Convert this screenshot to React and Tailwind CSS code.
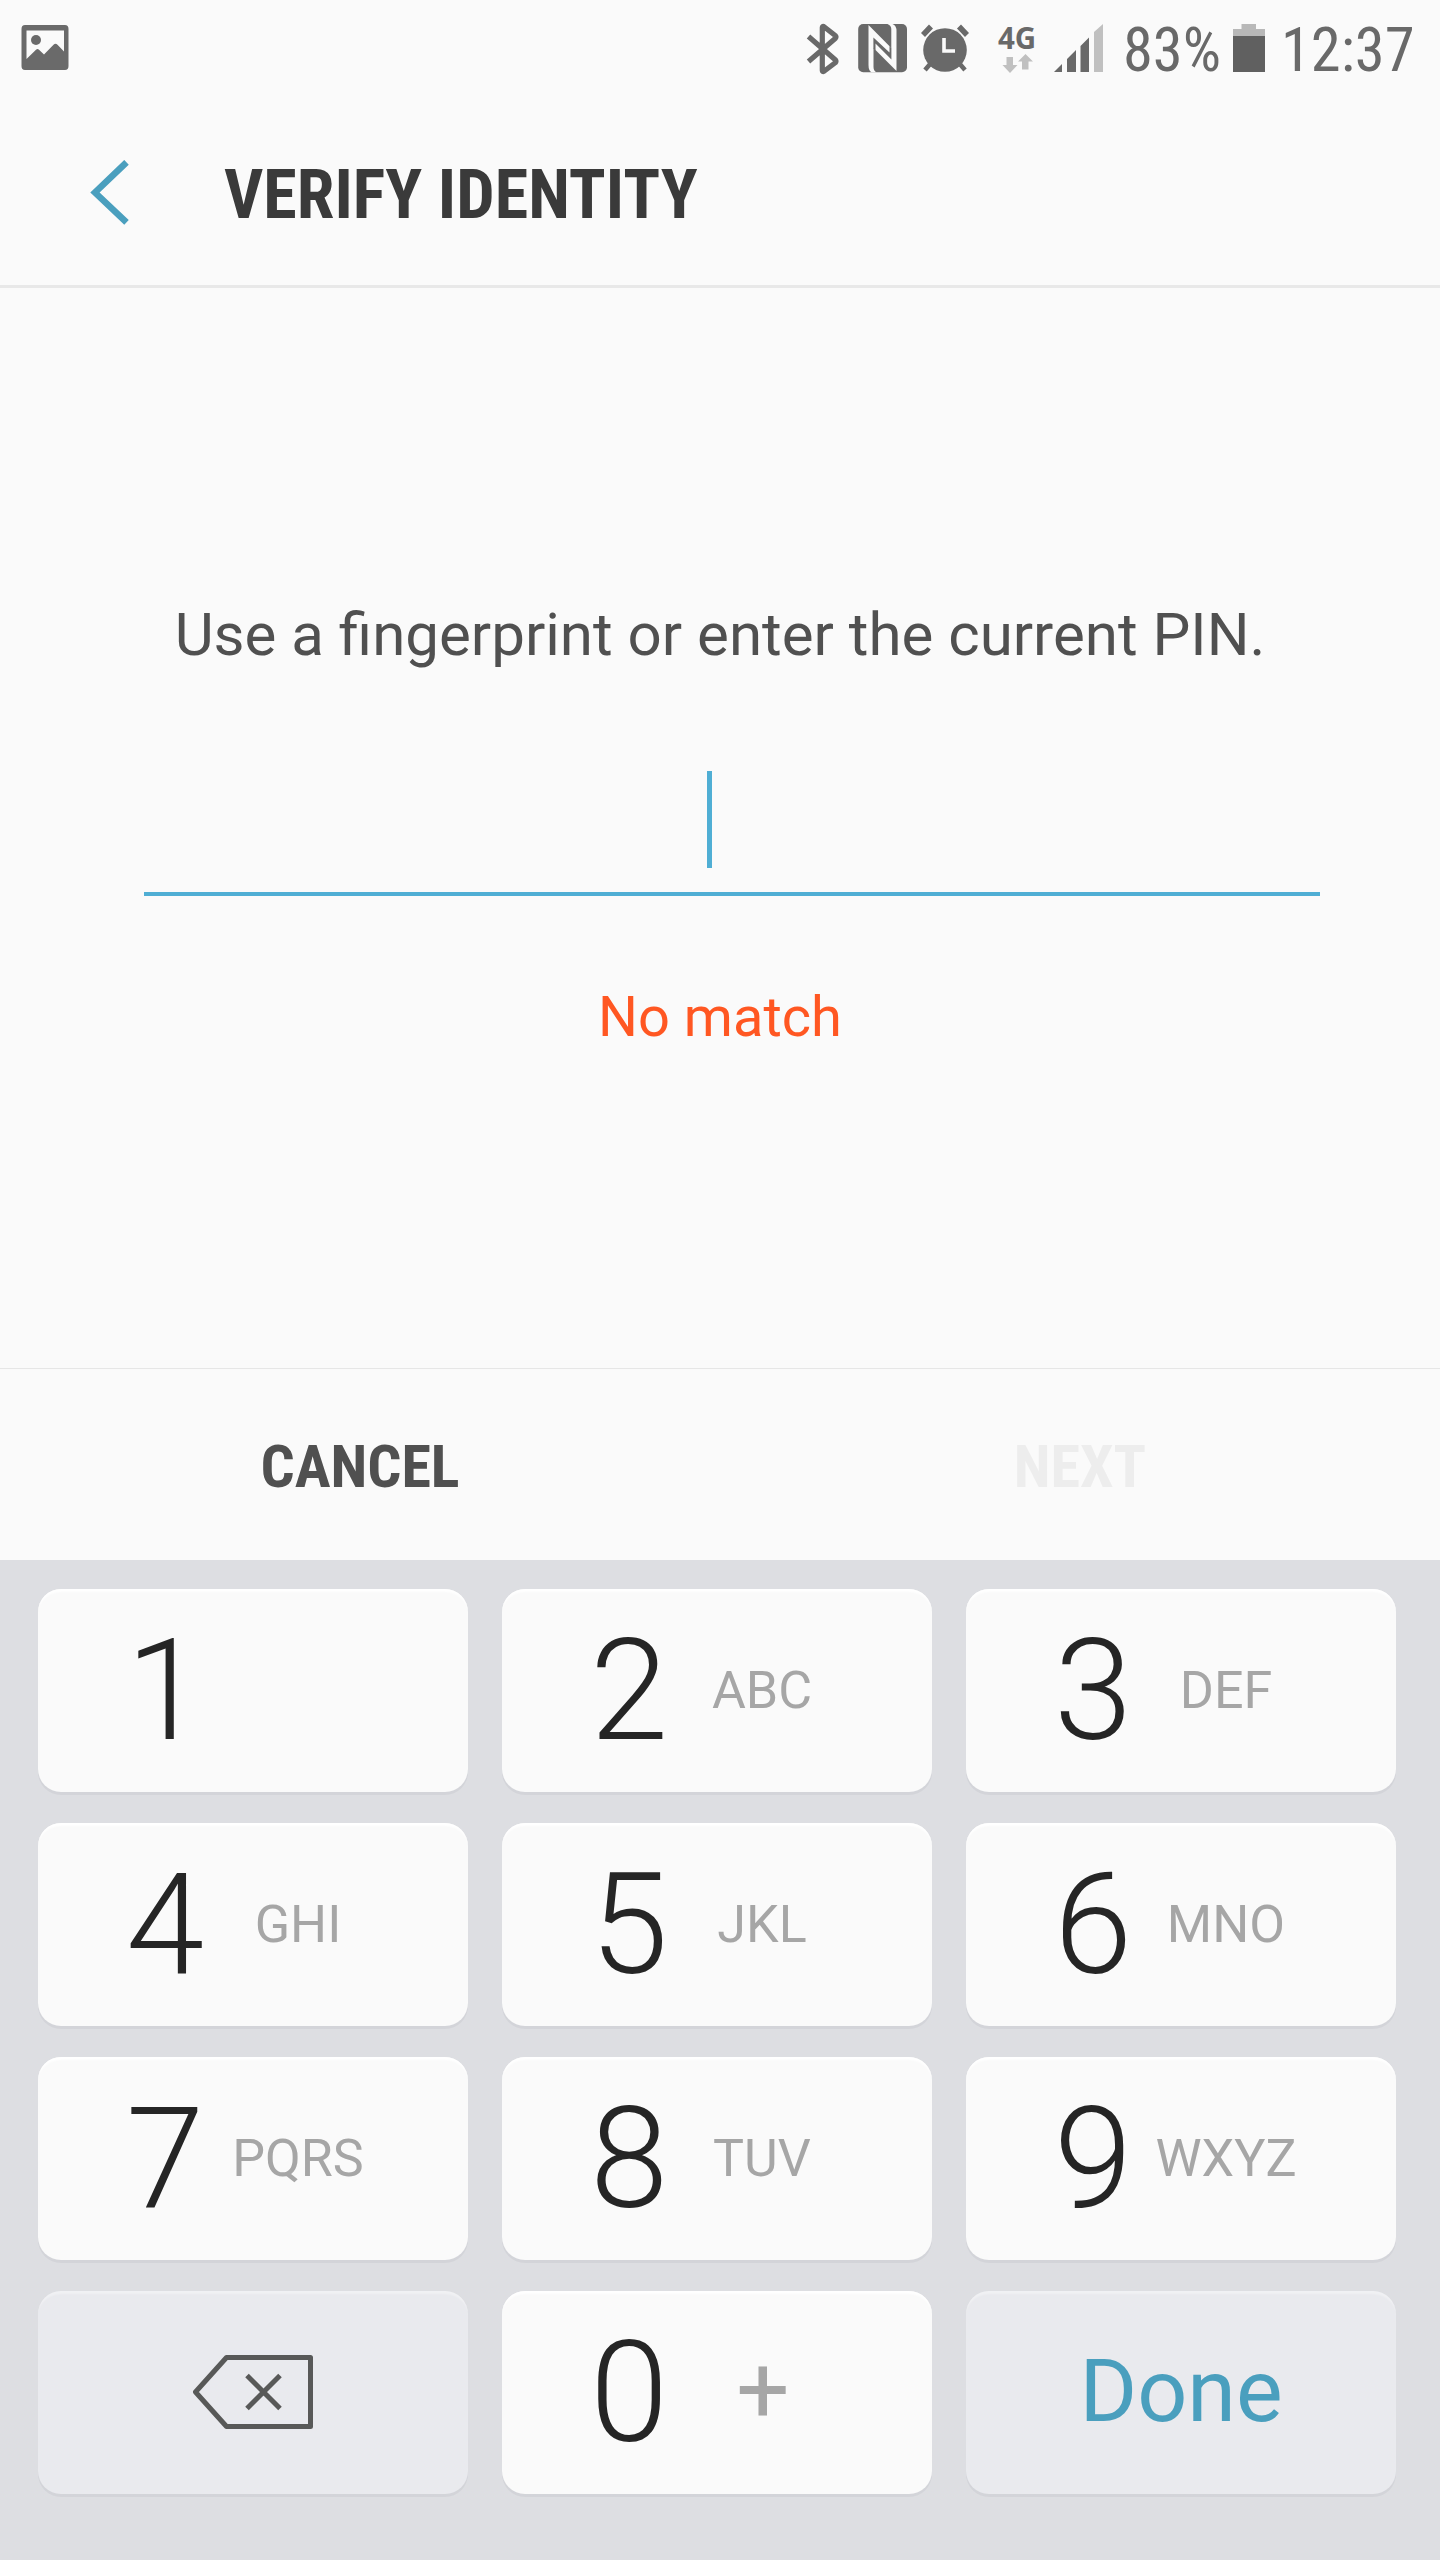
const keys = [
  ['1', ''],
  ['2', 'ABC'],
  ['3', 'DEF'],
  ['4', 'GHI'],
  ['5', 'JKL'],
  ['6', 'MNO'],
  ['7', 'PQRS'],
  ['8', 'TUV'],
  ['9', 'WXYZ'],
];

const keyBase =
  'h-[203px] rounded-[23px] flex items-center shadow-[0_3px_0_0_#d3d4d9,inset_0_4px_2px_-1px_rgba(255,255,255,0.9)]';

function DigitKey({ digit, letters }) {
  return (
    <button className={`${keyBase} bg-[#fafafa]`}>
      <span className="ml-[77px] w-[100px] text-center text-[141px] leading-[203px] font-light text-[#252525] h-[203px]">
        {digit}
      </span>
      <span className="ml-[3px] mt-[2px] w-[160px] text-center text-[52px] leading-none text-[#a6a6a6]">
        {letters}
      </span>
    </button>
  );
}

function ImageIcon() {
  return (
    <svg className="ml-[21px] mt-[25px]" width="48" height="46" viewBox="0 0 48 46">
      <path
        fill="#6a6a6a"
        fillRule="evenodd"
        d="M4 0H44Q47.500 0 47.500 4V41Q47.500 45 44 45H4Q.5 45 .5 41V4Q.5 0 4 0ZM5.500 5.500V34L15 24.700Q16.500 23.500 18 24.700L23 29.500L32.500 19.700Q34.500 18 36.500 19.700L43 26.500V5.500Z"
      />
      <circle cx="15" cy="15" r="5" fill="#6a6a6a" />
    </svg>
  );
}

function BluetoothIcon() {
  return (
    <svg className="ml-[806px]" width="34" height="52" viewBox="0 0 34 52">
      <path
        d="M2.500 13.500L29.500 37Q30.500 38.500 29.200 39.800L17.700 48.500Q16.300 48.700 16.300 47.500V4.500Q16.300 3 17.700 3.500L29.200 12.500Q30.500 14 29.500 15.200L2.500 38.500"
        fill="none"
        stroke="#696969"
        strokeWidth="5.200"
        strokeLinejoin="round"
      />
    </svg>
  );
}

function NfcIcon() {
  return (
    <svg width="50" height="49" viewBox="0 0 50 49">
      <rect x=".2" y="0" width="48.800" height="48.200" rx="5" fill="#696969" />
      <path
        fill="#fafafa"
        d="M10.500 1L33.300 24V5Q33.300 1.500 29.500 0H34.500Q38.500 1.500 38.500 7V47L15.500 24V43Q15.500 47 18.500 48.300H13.500Q10.500 46.500 10.500 41Z"
      />
      <path fill="#696969" d="M15.400 13.500L31.500 28.500V22L33.400 24V35.500L17.500 19.500V26.500L15.400 24.500Z" />
    </svg>
  );
}

function AlarmIcon() {
  return (
    <svg className="ml-[13px]" width="48" height="49" viewBox="0 0 48 49">
      <g fill="none" stroke="#696969">
        <path strokeWidth="5.500" d="M2 11L10 2.500M46 11L38 2.500" />
        <path strokeWidth="4.500" d="M10 39L4 46M38 39L44 46" />
      </g>
      <circle cx="24" cy="26" r="21.800" fill="#696969" />
      <path d="M23 14V27H34" fill="none" stroke="#fafafa" strokeWidth="3.600" />
    </svg>
  );
}

function NetworkIcon() {
  return (
    <div className="ml-[29px] w-[40px] h-[49px] flex flex-col">
      <span className="h-[28px] text-[29.500px] leading-[27px] font-bold text-[#696969] font-['Noto_Sans',sans-serif]">
        4G
      </span>
      <svg className="ml-[4px] mt-[2px]" width="32" height="19" viewBox="0 0 32 19">
        <path
          fill="#c0c0c0"
          d="M4.500 3H11V11H15.500L8 19L.5 11H4.500ZM20 15.500H26.500V7.500H31L23.500 0L16 7.500H20Z"
        />
      </svg>
    </div>
  );
}

function SignalIcon() {
  return (
    <svg className="ml-[16px]" width="50" height="49" viewBox="0 0 50 49">
      <path fill="#696969" d="M0 48L8 40V48ZM13 48V35L22 26V48ZM26.500 48V22L35 13.500V48Z" />
      <path fill="#c0c0c0" d="M40 48V8L49 0V48Z" />
    </svg>
  );
}

function BatteryIcon() {
  return (
    <svg className="ml-[12px]" width="32" height="49" viewBox="0 0 32 49">
      <path fill="#b8b8b8" d="M8.500 0H23V5H32V13H0V5H8.500Z" />
      <path fill="#606060" d="M0 12H32V48H0Z" />
    </svg>
  );
}

export default function App() {
  return (
    <div className="w-[1440px] h-[2560px] overflow-hidden bg-[#fafafa] font-[Roboto,sans-serif] flex flex-col">
      <div className="h-[100px] flex items-start">
        <ImageIcon />
        <div className="-ml-[69px] mt-[24px] h-[49px] flex items-start whitespace-nowrap">
          <div className="-mt-px">
            <BluetoothIcon />
          </div>
          <div className="ml-[18px]">
            <NfcIcon />
          </div>
          <AlarmIcon />
          <NetworkIcon />
          <SignalIcon />
          <span className="ml-[19px] w-[98px] text-[60.500px] leading-[53px] text-[#696969] [font-family:'Roboto_Condensed',Roboto,sans-serif] [font-stretch:75%]">
            83%
          </span>
          <BatteryIcon />
          <span className="ml-[16px] w-[133px] text-[60.500px] leading-[53px] text-[#696969] [font-family:'Roboto_Condensed',Roboto,sans-serif] [font-stretch:75%]">
            12:37
          </span>
        </div>
      </div>

      <header className="h-[188px] border-b-[3px] border-[#e8e8e8] flex items-start whitespace-nowrap">
        <svg className="ml-[90px] mt-[60px]" width="40" height="65" viewBox="0 0 40 65">
          <path d="M36.500 2.300L5 32.500L36.500 62.300" fill="none" stroke="#4a9fbe" strokeWidth="6.500" />
        </svg>
        <h1 className="ml-[94px] mt-[55px] text-[68.100px] leading-[80px] font-bold text-[#3a3a3a] [font-family:'Roboto_Condensed',Roboto,sans-serif] [font-stretch:75%]">
          VERIFY IDENTITY
        </h1>
      </header>

      <main className="h-[1080px] flex flex-col items-center whitespace-nowrap">
        <p className="mt-[312px] h-[70px] text-[60.050px] leading-[70px] text-[#505050]">
          Use a fingerprint or enter the current PIN.
        </p>
        <div className="mt-[101px] ml-[24px] w-[1176px] h-[125px] border-b-4 border-[#4faed4]">
          <div className="ml-[563px] w-[5px] h-[97px] bg-[#4faed4]" />
        </div>
        <p className="mt-[88px] h-[66px] text-[56px] leading-[66px] text-[#ff5722]">No match</p>
      </main>

      <div className="h-[192px] border-t border-[#e6e6e6] grid grid-cols-2 text-center text-[60px] leading-[187px] font-bold [font-family:'Roboto_Condensed',Roboto,sans-serif] [font-stretch:75%]">
        <button className="pt-[4px] text-[#505050]">CANCEL</button>
        <button className="pt-[4px] text-[#ededed]">NEXT</button>
      </div>

      <div className="h-[1000px] bg-[#dddee2] pt-[28.500px] pl-[38px] pr-[44px] grid grid-cols-3 gap-x-[34px] gap-y-[31px] content-start">
        {keys.map(([digit, letters]) => (
          <DigitKey key={digit} digit={digit} letters={letters} />
        ))}
        <button className="h-[203px] rounded-[23px] bg-[#e9eaee] flex items-center shadow-[0_3px_0_0_#d3d4d9,inset_0_4px_2px_-1px_rgba(255,255,255,0.35)]">
          <svg className="ml-[154px] -mt-px" width="122" height="76" viewBox="0 0 122 76">
            <g fill="none" stroke="#585958" strokeWidth="5" strokeLinejoin="round">
              <path d="M34.500 3.500H118.500V72.500H34.500L3.500 38Z" />
              <path d="M55 21.500L88 54.500M88 21.500L55 54.500" />
            </g>
          </svg>
        </button>
        <button className={`${keyBase} bg-[#fafafa]`}>
          <span className="ml-[77px] w-[100px] text-center text-[141px] leading-[203px] h-[203px] font-light text-[#252525]">
            0
          </span>
          <span className="ml-[4px] -mt-[4px] w-[160px] text-center text-[94px] leading-none text-[#a6a6a6]">+</span>
        </button>
        <button className="h-[203px] rounded-[23px] bg-[#e9eaee] pb-[2px] text-center text-[88px] leading-none text-[#4a9fbe] shadow-[0_3px_0_0_#d3d4d9,inset_0_4px_2px_-1px_rgba(255,255,255,0.35)]">
          Done
        </button>
      </div>
    </div>
  );
}
